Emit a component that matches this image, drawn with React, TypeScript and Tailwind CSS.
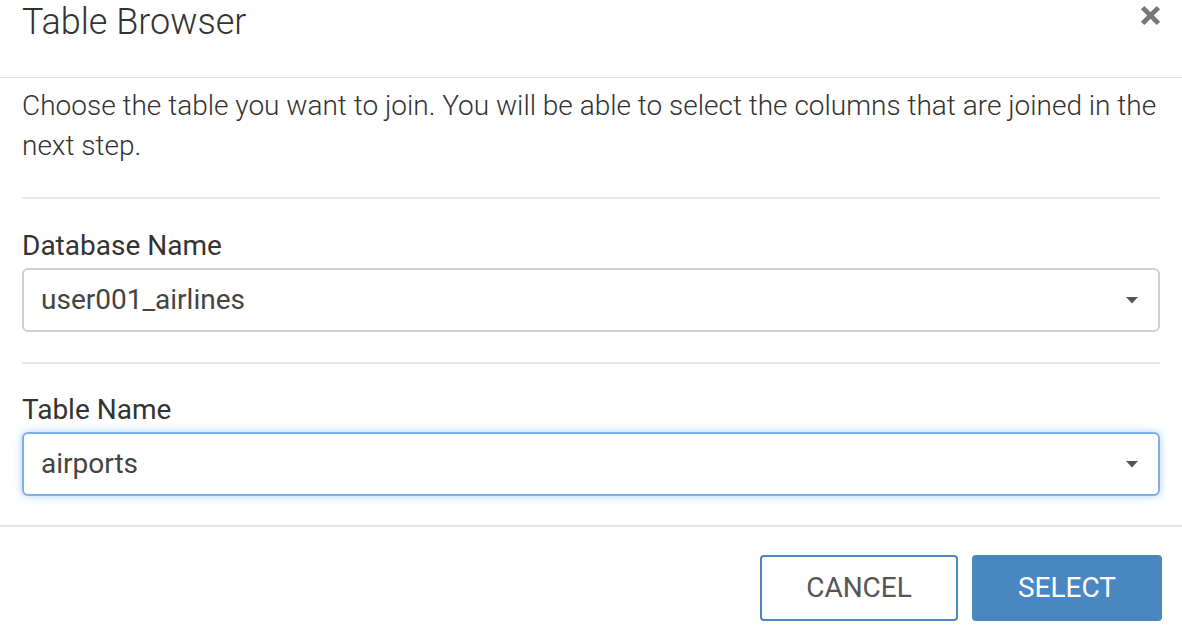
import React from "react";

const font = { fontFamily: "Roboto, 'Liberation Sans', sans-serif" };

function Caret() {
  return (
    <svg width="14" height="8" viewBox="0 0 14 8" className="absolute right-[19px] top-1/2 -translate-y-1/2">
      <path d="M1 1h12l-6 6.5z" fill="#555" />
    </svg>
  );
}

function SelectBox({ value, focused }: { value: string; focused?: boolean }) {
  return (
    <div
      className={
        focused
          ? "relative h-[64px] rounded-[6px] border-2 border-[#7eb0e6] bg-white pl-[17px] flex items-center shadow-[0_0_8px_rgba(102,175,233,0.55)]"
          : "relative h-[64px] rounded-[6px] border-2 border-[#d0d0d0] bg-white pl-[17px] flex items-center"
      }
    >
      <span className="text-[28px] text-[#444]">{value}</span>
      <Caret />
    </div>
  );
}

export default function App() {
  return (
    <div className="w-[1182px] h-[634px] bg-white text-[#333] overflow-hidden" style={font}>
      {/* Header */}
      <div className="h-[78px] border-b border-[#e1e4e8] px-[22px] flex justify-between">
        <h1 className="text-[36px] leading-[44px] font-light text-[#333]">Table Browser</h1>
        <svg width="21" height="21" viewBox="0 0 20 20" className="mt-[5px] -mr-[1px]">
          <path d="M2.5 2.5l15 15M17.5 2.5l-15 15" stroke="#777" strokeWidth="4.6" />
        </svg>
      </div>

      {/* Body */}
      <div className="px-[22px] pt-[8px]">
        <p className="text-[28px] leading-[40px] font-light text-[#333]">
          Choose the table you want to join. You will be able to select the columns that are joined in the next step.
        </p>
        <div className="mt-[31px] border-t-2 border-[#e8e8e8]" />
        <div className="pt-[30px] pb-[30px]">
          <label className="block text-[28px] leading-[34px] text-[#333] mb-[5px]">Database Name</label>
          <SelectBox value="user001_airlines" />
        </div>
        <div className="border-t-2 border-[#e8e8e8]" />
        <div className="pt-[29px] pb-[29px]">
          <label className="block text-[28px] leading-[34px] text-[#333] mb-[5px]">Table Name</label>
          <SelectBox value="airports" focused />
        </div>
      </div>

      {/* Footer */}
      <div className="border-t-2 border-[#e1e4e8] pt-[28px] pr-[20px] flex justify-end gap-[14px]">
        <button className="w-[198px] h-[66px] rounded-[4px] border-2 border-[#4a87c0] bg-white text-[28px] text-[#555] uppercase">
          Cancel
        </button>
        <button className="w-[190px] h-[66px] rounded-[4px] bg-[#4a87c0] text-[28px] text-white uppercase">
          Select
        </button>
      </div>
    </div>
  );
}
